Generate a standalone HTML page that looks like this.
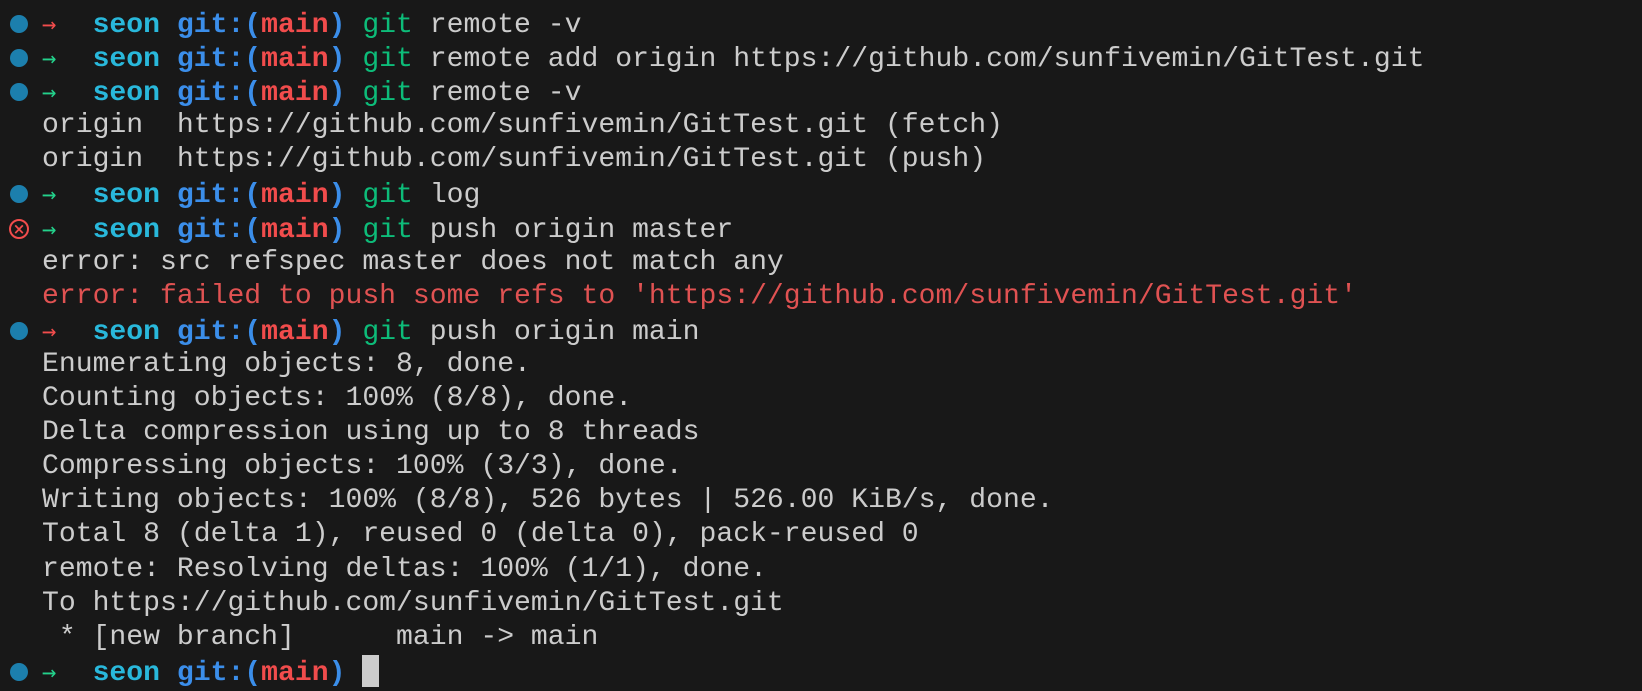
<!DOCTYPE html>
<html><head><style>
html,body{margin:0;padding:0;background:#181818;width:1642px;height:658px;overflow:hidden}
.t{position:absolute;left:42px;top:7px;font-family:"Liberation Mono",monospace;font-size:28.1px;line-height:34.1px;color:#cccccc}
.l{height:34.1px;position:relative;white-space:pre}
.c{position:absolute;left:-32px;top:8px;width:18px;height:18px;border-radius:50%;background:#1c7fad}
.x{position:absolute;left:-33px;top:7px;width:16px;height:16px;border-radius:50%;border:2px solid #f14c4c;color:#f14c4c;font-size:15px;line-height:16px;text-align:center;font-weight:bold;font-family:"DejaVu Sans",sans-serif}
.ar{color:#23d18b;font-family:"DejaVu Sans Mono",monospace;font-size:24px;display:inline-block;width:16.87px}.ar.r{color:#f14c4c}
.s{color:#29b8db;font-weight:bold}.b{color:#3b8eea;font-weight:bold}.m{color:#f14c4c;font-weight:bold}.g{color:#0dbc79}
.e{color:#e05252}
.cur{display:inline-block;width:17px;height:32px;background:#cccccc;vertical-align:top}
</style></head><body><div class="t"><div class="l"><span class="c"></span><span class="ar r">→</span>  <span class="s">seon</span> <span class="b">git:(</span><span class="m">main</span><span class="b">)</span> <span class="g">git</span> remote -v</div><div class="l"><span class="c"></span><span class="ar">→</span>  <span class="s">seon</span> <span class="b">git:(</span><span class="m">main</span><span class="b">)</span> <span class="g">git</span> remote add origin https://github.com/sunfivemin/GitTest.git</div><div class="l"><span class="c"></span><span class="ar">→</span>  <span class="s">seon</span> <span class="b">git:(</span><span class="m">main</span><span class="b">)</span> <span class="g">git</span> remote -v</div><div class="l">origin  https://github.com/sunfivemin/GitTest.git (fetch)</div><div class="l">origin  https://github.com/sunfivemin/GitTest.git (push)</div><div class="l"><span class="c"></span><span class="ar">→</span>  <span class="s">seon</span> <span class="b">git:(</span><span class="m">main</span><span class="b">)</span> <span class="g">git</span> log</div><div class="l"><span class="x">×</span><span class="ar">→</span>  <span class="s">seon</span> <span class="b">git:(</span><span class="m">main</span><span class="b">)</span> <span class="g">git</span> push origin master</div><div class="l">error: src refspec master does not match any</div><div class="l e">error: failed to push some refs to 'https://github.com/sunfivemin/GitTest.git'</div><div class="l"><span class="c"></span><span class="ar r">→</span>  <span class="s">seon</span> <span class="b">git:(</span><span class="m">main</span><span class="b">)</span> <span class="g">git</span> push origin main</div><div class="l">Enumerating objects: 8, done.</div><div class="l">Counting objects: 100% (8/8), done.</div><div class="l">Delta compression using up to 8 threads</div><div class="l">Compressing objects: 100% (3/3), done.</div><div class="l">Writing objects: 100% (8/8), 526 bytes | 526.00 KiB/s, done.</div><div class="l">Total 8 (delta 1), reused 0 (delta 0), pack-reused 0</div><div class="l">remote: Resolving deltas: 100% (1/1), done.</div><div class="l">To https://github.com/sunfivemin/GitTest.git</div><div class="l"> * [new branch]      main -&gt; main</div><div class="l"><span class="c"></span><span class="ar">→</span>  <span class="s">seon</span> <span class="b">git:(</span><span class="m">main</span><span class="b">)</span> <span class="cur"></span></div></div></body></html>
